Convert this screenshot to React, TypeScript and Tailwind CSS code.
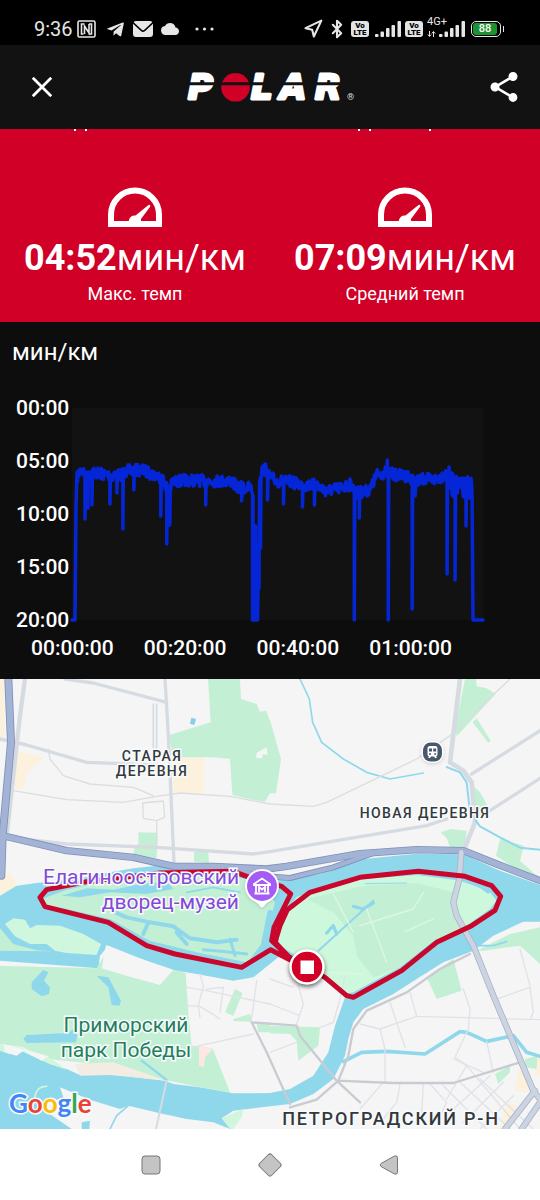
import React from 'react';
import { Bluetooth, Navigation } from 'lucide-react';
import { FaTelegramPlane } from 'react-icons/fa';
import { MdCloud, MdShare } from 'react-icons/md';

type Point = [number, number];

/* ---------- Pace data ---------- */

const TREND: Point[] = [
  [5, 70], [8, 63], [11, 62], [14, 71], [20, 64], [35, 67], [48, 67], [55, 63], [70, 62], [80, 66], [90, 70],
  [94, 77], [97, 84], [101, 74], [115, 72], [135, 73], [160, 73], [165, 79], [179, 80], [181, 84],
  [188, 70], [190, 63], [194, 61], [197, 68], [205, 73], [220, 74], [230, 77], [245, 77], [255, 83],
  [270, 80], [280, 76], [284, 85], [295, 83], [300, 80], [305, 67], [315, 64], [325, 67], [338, 68],
  [344, 75], [352, 71], [362, 72], [376, 66], [380, 76], [390, 82], [401, 78],
];

const DIPS: Point[] = [
  [13, 111], [16, 100], [20, 97], [38, 96], [45, 85], [51, 121], [62, 82], [89, 108], [95, 136],
  [98, 117], [134, 97], [170, 93], [181, 212], [184, 118], [186, 212], [189, 140], [196, 92],
  [212, 96], [231, 99], [243, 97], [283, 212], [288, 110], [317, 212], [341, 201], [344, 88], [376, 166],
  [384, 172], [395, 118],
];

const trendAt = (x: number) => {
  const i = Math.max(1, TREND.findIndex(([px]) => px >= x));
  const [x0, y0] = TREND[i - 1];
  const [x1, y1] = TREND[i];
  return y0 + ((y1 - y0) * (x - x0)) / (x1 - x0);
};

const buildPace = () => {
  const out: string[] = ['0,212', '3,212', '4,100'];
  let seed = 7;
  for (let x = 5; x <= 401; x += 0.5) {
    seed = (seed * 16807) % 2147483647;
    const noise = (seed / 2147483647 - 0.5) * (x > 376 ? 24 : 12);
    const dip = DIPS.find(([px]) => px === x);
    const y = trendAt(x) + noise;
    if (x > 181 && x < 188) {
      out.push(`${x},${dip ? dip[1] : x < 184 ? 212 : 180}`);
      continue;
    }
    out.push(`${x},${y.toFixed(1)}`);
    if (dip) out.push(`${x},${dip[1]}`, `${x + 0.5},${y.toFixed(1)}`);
    if (x === 316) out.push('316,52', '316.5,64');
  }
  out.push('402,212', '412,212');
  return out.join(' ');
};

const PACE_POINTS = buildPace();
const Y_TICKS = ['00:00', '05:00', '10:00', '15:00', '20:00'];
const X_TICKS = ['00:00:00', '00:20:00', '00:40:00', '01:00:00'];

/* ---------- Status bar ---------- */

const VoLte = () => (
  <span className="flex h-4 w-[18px] flex-col items-center justify-center rounded-[3px] bg-[#e4e4e4] text-[8px] leading-[7px] font-black text-black">
    <span>Vo</span>
    <span>LTE</span>
  </span>
);

const Signal = () => (
  <svg className="h-4 w-[26px]" viewBox="0 0 26 16" fill="#e6e6e6" aria-hidden="true">
    <rect x="0" y="13" width="3.500" height="3" rx="1" />
    <rect x="5.500" y="10.500" width="3.500" height="5.500" rx="1" />
    <rect x="11" y="7" width="3.500" height="9" rx="1" />
    <rect x="16.500" y="4" width="3.500" height="12" rx="1" />
    <rect x="22.500" y="0" width="3.500" height="16" rx="1" />
  </svg>
);

const StatusBar = () => (
  <div className="flex h-[45px] items-end justify-between bg-black pr-9 pb-1 pl-[34px] text-[#e6e6e6]">
    <div className="flex h-6 items-center">
      <span className="w-[43px] text-[20px] leading-6">9:36</span>
      <svg className="h-[18px] w-[19px]" viewBox="0 0 19 18" fill="none" stroke="currentColor" aria-hidden="true">
        <rect x="1" y="1" width="17" height="16" rx="1.500" strokeWidth="1.600" />
        <path d="M7.500 4H4.500v10h2M7.500 14V6l4.500 7V4M11.500 14h3V4H12" strokeWidth="1.600" />
      </svg>
      <FaTelegramPlane className="ml-2.5 size-[19px]" aria-hidden="true" />
      <svg className="ml-2 h-4 w-5" viewBox="0 0 20 16" fill="currentColor" aria-hidden="true">
        <path d="M3 0h14a3 3 0 0 1 2.300 1.300L11.200 8.800a1.800 1.800 0 0 1-2.400 0L.7 1.300A3 3 0 0 1 3 0Z" />
        <path d="M0 2.800 7.800 10a3.200 3.200 0 0 0 4.400 0L20 2.800V13a3 3 0 0 1-3 3H3a3 3 0 0 1-3-3Z" />
      </svg>
      <MdCloud className="ml-2 size-[18px]" aria-hidden="true" />
      <svg className="ml-4 h-1 w-5" viewBox="0 0 20 4" fill="currentColor" aria-hidden="true">
        <circle cx="2" cy="2" r="1.600" />
        <circle cx="9.500" cy="2" r="1.600" />
        <circle cx="17" cy="2" r="1.600" />
      </svg>
    </div>
    <div className="flex h-6 items-center">
      <Navigation className="size-5" strokeWidth={2.5} aria-hidden="true" />
      <Bluetooth className="mx-1 size-5" strokeWidth={2.5} aria-hidden="true" />
      <VoLte />
      <span className="ml-1.5"><Signal /></span>
      <span className="ml-1"><VoLte /></span>
      <span className="relative ml-1 flex w-[38px] justify-end">
        <Signal />
        <span className="absolute -top-1.5 left-0 text-[11px] leading-[14px]">4G+</span>
        <svg className="absolute bottom-0 left-0 h-[6px] w-[9px]" viewBox="0 0 9 6" stroke="currentColor" fill="none" aria-hidden="true">
          <path d="M2.500 0v5M.8 3.500l1.700 2 1.700-2M6.500 6V1M4.800 2.500l1.700-2 1.700 2" />
        </svg>
      </span>
      <span className="ml-1.5 flex h-4 w-[30px] rounded-[5px] border border-[#e6e6e6] p-px">
        <span className="flex h-full w-6 items-center justify-center rounded-[3px] bg-[#1e9231] text-[11px] leading-3 font-medium text-white">
          88
        </span>
      </span>
      <span className="ml-0.5 h-1.5 w-px bg-[#e6e6e6]" />
    </div>
  </div>
);

/* ---------- Header ---------- */

const PolarLogo = () => (
  <svg className="h-12 w-44 overflow-visible" viewBox="0 0 176 48" role="img" aria-label="Polar">
    <g fill="#fff" stroke="#fff" strokeWidth="3" strokeLinejoin="round" fontFamily="DejaVu Sans" fontSize="34" fontWeight="700" fontStyle="italic">
      <text x="3" y="36">P</text>
      <text x="66" y="36">L</text>
      <text x="95" y="36">A</text>
      <text x="130" y="36">R</text>
    </g>
    <circle cx="50.500" cy="24.300" r="14.300" fill="#d00027" />
    <path d="M0 19.300h164v3H0z" fill="#121212" />
    <text x="162" y="37" fill="#ddd" fontFamily="Roboto" fontSize="9">®</text>
  </svg>
);

const Header = () => (
  <header className="flex h-[84px] items-center justify-between bg-[#121212] pr-3.5 pl-5 text-white">
    <button type="button" aria-label="Закрыть" className="flex size-11 items-center justify-center">
      <svg className="size-5" viewBox="0 0 20 20" stroke="currentColor" strokeWidth="2.800">
        <path d="M.8.800l18.400 18.400M19.200.800.800 19.200" />
      </svg>
    </button>
    <PolarLogo />
    <button type="button" aria-label="Поделиться" className="flex size-11 items-center justify-center">
      <MdShare className="size-9 shrink-0" />
    </button>
  </header>
);

/* ---------- Summary ---------- */

const Gauge = () => (
  <svg className="h-10 w-[54px]" viewBox="0 0 54 40" aria-hidden="true">
    <path d="M3 37V27.500a24 24 0 0 1 48 0V37Z" fill="none" stroke="#fff" strokeWidth="6" />
    <path d="M21 36a6 6 0 0 1 6.500-7.500L40.500 18q2-.8 1.800 1.500L33 32v4Z" fill="#fff" />
  </svg>
);

interface StatProps {
  value: string;
  unit: string;
  label: string;
}

const Stat: React.FC<StatProps> = ({ value, unit, label }) => (
  <div className="flex flex-col items-center pt-[58px] pb-4">
    <Gauge />
    <p className="mt-[11px] text-[36px] leading-10 whitespace-nowrap">
      <span className="font-bold">{value}</span>{unit}
    </p>
    <p className="mt-1 text-[18px] leading-6">{label}</p>
  </div>
);

const Summary = () => (
  <section className="relative grid grid-cols-2 bg-[#d00027] text-white">
    {/* tails of the row scrolled under the header */}
    <svg className="absolute inset-x-0 top-0 w-full" viewBox="0 0 540 3" fill="#fff" aria-hidden="true">
      <path d="M74 0h2v2h-2zM85 0h2v2h-2zM358 0h2v2h-2zM369 0h2v2h-2zM429 0h2v2h-2z" />
    </svg>
    <Stat value="04:52" unit="мин/км" label="Макс. темп" />
    <Stat value="07:09" unit="мин/км" label="Средний темп" />
  </section>
);

/* ---------- Pace chart ---------- */

const PaceChart = () => (
  <section className="bg-[#0d0d0d] pb-[19px] text-white">
    <h2 className="px-3 pt-4 text-[24px] leading-7">мин/км</h2>
    <div className="mt-[30px] flex pr-[57px] pl-4 text-[21px] leading-6 font-medium">
      <div className="flex h-[236px] w-14 shrink-0 flex-col justify-between">
        {Y_TICKS.map((tick) => (
          <span key={tick}>{tick}</span>
        ))}
      </div>
      <svg className="my-3 h-[212px] min-w-0 flex-1 overflow-visible" viewBox="0 0 412 212" preserveAspectRatio="none" role="img" aria-label="График темпа">
        <rect width="412" height="212" fill="#121212" />
        <polyline points={PACE_POINTS} fill="none" stroke="#0526d6" strokeWidth="3.500" strokeLinejoin="round" strokeLinecap="round" />
      </svg>
    </div>
    <div className="mt-1 mr-[73px] ml-4 grid grid-cols-4 text-center text-[21px] leading-6 font-medium">
      {X_TICKS.map((tick) => (
        <span key={tick}>{tick}</span>
      ))}
    </div>
  </section>
);

/* ---------- Map ---------- */

const MapDrawing = () => (
  <svg className="block h-auto w-full" viewBox="0 0 1620 1350" aria-hidden="true" strokeLinejoin="round" strokeLinecap="round">
    <rect width="1620" height="1350" fill="#f5f5f5" />

    {/* built-up patches */}
    <g fill="#fbf1dd">
      <path d="M0 0H14V180L0 190ZM50 215 130 235 80 285 72 330H45ZM518 236H612V344L520 338Z" />
      <path d="M0 600 30 580 50 622 0 648ZM1555 1170 1590 1180 1600 1240 1545 1235ZM1600 1140 1620 1130V1190H1608Z" />
      <path d="M1520 1270 1570 1290 1520 1350H1500Z" />
    </g>

    {/* parks */}
    <g fill="#c3f0d4">
      <path d="M624 0H720L723 60 770 75 780 98 798 95 812 130 843 240 828 343H810L795 368 755 362 697 348 690 240 640 235H518L508 168 632 130Z" />
      <path d="M415 460 473 461 470 538 400 530 405 500 415 495ZM582 518H625L627 552 582 548Z" />
      <path d="M1395 0H1428L1430 22 1460 28 1487 45 1370 172 1365 150ZM1418 130 1430 118 1472 185 1465 192Z" />
      <path d="M1420 322 1440 340 1462 378V395L1440 410 1415 400ZM1322 460 1352 450 1400 455 1395 510 1350 505 1340 478Z" />
      <path d="M1500 480 1572 500 1560 545 1608 588 1550 572 1488 530Z" />
      <path d="M1280 895 1360 840 1385 935 1310 960ZM810 1040 960 1045 955 1100 895 1145 890 1085 870 1065 810 1063Z" />
      <path d="M1485 1185 1530 1160V1180L1495 1215ZM1430 815 1530 765 1620 745V855L1560 800 1450 815ZM1575 1140 1612 1130 1610 1170 1575 1165Z" />
      <path d="M675 1000 705 930 728 942 700 1010ZM700 1020 750 1005 757 1028 700 1026ZM770 1035H810V1060H775Z" />
    </g>
    <path d="M770 222 800 205 803 228 790 225 785 238 768 236Z" fill="#f5f5f5" />
    <path d="M574 116 588 120 583 138 570 134Z" fill="#7fd0ea" />

    {/* Neva arms */}
    <path
      d="M0 650 50 620 110 612 230 600 300 585 400 568 490 558 600 570 760 585 830 605 960 585 1090 540 1250 524 1390 526 1500 575 1620 618V728L1570 728 1480 770 1420 815 1330 850 1250 900 1180 945 1090 990 1060 1030 1045 1080 1035 1130 1000 1200 940 1245 870 1275 810 1282 700 1295 665 1318 700 1350H690L640 1330 560 1320 480 1303 385 1280 360 1290 270 1262 180 1225 190 1255 120 1285 215 1350H0V1115L30 1125 70 1118 150 1155 200 1170 240 1188 330 1187 400 1195 495 1205 520 1215 600 1225 700 1243 810 1242 870 1230 940 1190 985 1120 1005 1040 1035 955 970 900 865 840 835 835 760 895 700 905 590 885 500 870 325 800 300 830 295 868 0 845Z"
      fill="#8fd8ec"
    />
    <path d="M104 1255Q110 1220 140 1222" fill="none" stroke="#cdf6dc" strokeWidth="5" />
    <path d="M245 1330 270 1325 268 1350H245Z" fill="#8fd8ec" />
    <path d="M385 1280 350 1310 330 1350" fill="none" stroke="#8fd8ec" strokeWidth="5" />
    <path d="M665 1318 730 1290 725 1315 700 1350H690Z" fill="#d0f6dd" />

    {/* Primorsky park */}
    <path d="M0 860 290 868 310 835 390 880 480 915 520 872 557 882 565 1000 575 1100 638 1108 690 1240 600 1225 495 1203 400 1195 330 1170 240 1150 140 1140 70 1105 0 1095Z" fill="#c3f0d4" />
    <path d="M0 1095 60 1105 140 1130 200 1172 150 1155 70 1118 30 1125 0 1115Z" fill="#d0f6dd" />
    <path d="M10 1095 60 1108 145 1132 125 1145 70 1115 50 1130 15 1120Z" fill="#f5f5f5" />
    <path d="M225 1155 340 1150 500 1205 390 1192 330 1188 240 1190Z" fill="#f3ece2" />
    <path d="M318 798 400 832 520 872 480 918 395 895 305 868Z" fill="#f5f5f5" />
    <path d="M597 1100 640 1110 615 1135 612 1165 597 1160Z" fill="#fde6e3" />
    <path d="M130 872 145 880 132 905 150 925 147 945 125 952 95 930 95 910ZM290 890 325 895 363 965 358 980 335 978 325 925ZM70 1080 80 1068 205 1062 220 1050 232 1068 228 1090 80 1092Z" fill="#8fd8ec" />
    <path d="M425 1145 500 1203" stroke="#8fd8ec" strokeWidth="7" />

    {/* small western island */}
    <path d="M15 735 40 718 75 722 90 748 110 738 180 740 250 765 303 795 290 828 200 822 165 815 140 795 90 795 45 772Z" fill="#cff7dd" />
    <path d="M0 748 40 795 110 814 160 817 0 815Z" fill="#c3f0d4" />

    {/* Elagin island */}
    <path d="M132 658 200 632 320 605 480 580 600 582 740 600 800 635 825 670 805 740 790 805 740 850 600 822 450 785 330 720 200 690 135 678Z" fill="#c3f0d4" />
    <path d="M185 650 260 628 340 632 420 615 500 608 520 630 440 645 330 640 240 655Z" fill="#8fd8ec" />
    <g fill="none" stroke="#8fd8ec">
      <path d="M345 700 380 715 440 728 520 742 570 778 650 790 710 782M530 760 560 795M445 730 430 765" strokeWidth="12" />
      <path d="M610 812 680 818 740 825M690 780 705 830" strokeWidth="9" />
      <path d="M810 700 790 800 760 840" strokeWidth="16" />
      <path d="M560 640 640 625 720 640" strokeWidth="5" />
    </g>

    {/* Kamenny island */}
    <path d="M848 705 890 655 960 625 1090 600 1250 588 1390 606 1470 640 1490 665 1470 690 1400 740 1300 785 1200 865 1060 940 1030 945 960 885 880 825 838 800 836 760Z" fill="#cdf8dc" />
    <path d="M920 660 1090 620 1250 612 1360 640 1365 700 1395 745 1300 785 1200 865 1120 895 1070 830 1060 770 1000 700Z" fill="#c3f0d4" />
    <g fill="none" stroke="#8fd8ec">
      <path d="M1120 665 955 815" strokeWidth="6" />
      <path d="M1060 682 1090 690 1120 672M980 762 1000 740 1010 765" strokeWidth="10" />
      <path d="M1095 614 1220 612" strokeWidth="3" />
      <path d="M1385 603 1440 622 1465 640" strokeWidth="8" />
    </g>
    <path d="M1000 645 1060 760M1080 740 1240 690 1270 640M1215 758 1300 720M1100 690 1160 850M910 870 990 880 1090 885" fill="none" stroke="#dcf7e5" strokeWidth="4" />

    {/* streams */}
    <g fill="none" stroke="#8fd8ec">
      <path d="M900 0 928 60 938 130 965 190 1030 240 1100 280 1170 300 1270 282" strokeWidth="5" />
      <path d="M1030 1148 1085 1120 1160 1117 1275 1125 1380 1058 1400 1060 1460 1087 1540 1070 1580 1120 1620 1132" strokeWidth="11" />
      <path d="M1430 800 1480 800 1520 788" strokeWidth="5" />
    </g>

    {/* streets */}
    <g fill="none" stroke="#dfe2e8" strokeWidth="4">
      <path d="M560 925 620 935 810 975M600 885 610 920 595 980 600 1015M565 980 600 983 630 1000 660 1020M620 930 670 925 660 1000M810 1120 890 1090M575 1105 760 1065M810 900 880 925M770 905 755 1020" />
      <path d="M810 975 895 1008M895 920 910 975 890 1035M1035 890 1020 960 1000 1030 960 1045M1080 1035 1140 1050 1250 1012 1620 1022M1170 970 1215 1105M1140 1050 1155 1110V1210M1230 940 1250 1012" />
      <path d="M1390 930 1410 990 1405 1050 1365 1135 1400 1160 1560 1350M1490 960 1590 925 1600 1000 1590 1022M1560 810 1590 920M1460 1087 1480 1180M1400 1160 1340 1260M1380 1210 1530 1350M1440 1200 1600 1350M1330 1220 1460 1350" />
      <path d="M1200 1215 1190 1270 1150 1320M1270 1215 1265 1300M1290 1215 1340 1270 1310 1330M1150 1210 1080 1290M1360 1140 1450 1180M1470 1190 1350 1300M1510 1210 1390 1330M1540 1250 1440 1350" />
    </g>
    <g fill="none" stroke="#dcdddf" strokeWidth="4">
      <path d="M145 210 150 240 190 290 270 315 400 325 460 350M40 335 200 362 370 370 470 352 540 342 690 352 810 375 940 382 980 370 1250 240 1350 170 1530 0M428 372 490 366 494 415 470 425 430 418ZM470 425V510" />
    </g>
    <g fill="none" stroke="#d6dbe2">
      <path d="M75 0 60 110 20 470" strokeWidth="13" />
      <path d="M0 180 80 198 260 250 470 258M195 0 280 12 500 70" strokeWidth="10" />
      <path d="M495 0 505 170 522 550" strokeWidth="10" />
      <path d="M460 75V215M470 75V215" strokeWidth="5" />
      <path d="M30 475 200 495 470 505 760 525 810 518 1280 440 1340 420" strokeWidth="10" />
      <path d="M1380 0 1350 250 1390 275 1415 310 1425 430 1395 505" strokeWidth="14" />
      <path d="M1415 285 1620 155M1465 398 1620 298" strokeWidth="10" />
      <path d="M500 1205 468 1350" strokeWidth="6" />
    </g>
    <path d="M1340 264 1380 280 1400 310 1410 400 1440 442 1500 475 1560 506 1620 512" fill="none" stroke="#8fd8ec" strokeWidth="6" />
    <g fill="none" stroke="#c9cbd2" strokeWidth="7">
      <path d="M755 1030 890 1040 900 1070 1010 1205 1080 1270M755 1030 800 1120 870 1275M1010 1205 1180 1212 1360 1212 1560 1150" />
      <path d="M870 1285 950 1262 1015 1205 1045 1130 1060 1050 1100 995 1220 940 1320 870 1410 825" />
    </g>

    {/* highways */}
    <g fill="none" stroke="#7f90b8">
      <path d="M25 0 33 190 8 470 4 590" strokeWidth="24" />
      <path d="M0 468 200 515 400 535 520 562 640 562 800 570 860 562 1080 524 1250 512 1390 515 1490 555 1620 605" strokeWidth="22" />
      <path d="M690 572 800 592 870 597 1000 565 1120 522" strokeWidth="18" />
    </g>
    <g fill="none" stroke="#a2b3d5">
      <path d="M25 0 33 190 8 470 4 590" strokeWidth="19" />
      <path d="M0 468 200 515 400 535 520 562 640 562 800 570 860 562 1080 524 1250 512 1390 515 1490 555 1620 605" strokeWidth="17" />
      <path d="M690 572 800 592 870 597 1000 565 1120 522" strokeWidth="13" />
    </g>
    <g fill="none">
      <path d="M1384 520 1378 600 1360 670 1370 710 1420 800 1480 950 1600 1235 1620 1260M1605 1235 1515 1350M1620 1270 1565 1350" stroke="#a9b4c8" strokeWidth="19" />
      <path d="M1384 520 1378 600 1360 670 1370 710 1420 800 1480 950 1600 1235 1620 1260M1605 1235 1515 1350M1620 1270 1565 1350" stroke="#ccd4e2" strokeWidth="14" />
    </g>

    {/* recorded track */}
    <path
      d="M920 865 865 832 825 790 840 740 862 692 930 640 1080 595 1255 577 1395 592 1475 620 1502 652 1485 694 1415 740 1310 790 1205 875 1105 930 1060 955 1040 950 975 895 920 865 865 840 812 812 725 865 525 825 440 800 325 730 135 683 120 655 140 632 260 608 480 582 700 577 740 592 845 622 872 645 822 745 815 785 865 832"
      fill="none"
      stroke="#c9062c"
      strokeWidth="15"
    />
  </svg>
);

const MuseumPin = () => (
  <svg className="absolute top-[188px] left-[242px] h-[46px] w-10 drop-shadow" viewBox="0 0 40 46" role="img" aria-label="Музей">
    <path d="M20 2a17 17 0 0 1 10 30.700c-4 2.500-7 4-8 6.500q-2 2.500-4 0c-1-2.500-4-4-8-6.500A17 17 0 0 1 20 2Z" fill="#fff" />
    <circle cx="20" cy="19" r="15" fill="#a45cf5" />
    <path d="M12 17 20 11.500 28 17v1H12ZM12.500 26.500h15M14 18v8M26 18v8" fill="none" stroke="#fff" strokeWidth="1.800" />
    <path d="M17 25v-5l3 2.500 3-2.500v5" fill="none" stroke="#fff" strokeWidth="1.800" />
  </svg>
);

const StationPin = () => (
  <svg className="absolute top-[60px] left-[420px] size-[26px] drop-shadow" viewBox="0 0 26 26" role="img" aria-label="Станция">
    <rect x="1.500" y="2" width="22" height="22" rx="9" fill="#fff" />
    <rect x="3" y="3.500" width="19" height="19" rx="7.500" fill="#47586a" />
    <path d="M10 7h5a2.500 2.500 0 0 1 2.500 2.500v6a2 2 0 0 1-1.500 2l1 1.500h-2l-1-1.500h-3L10 19H8l1-1.500a2 2 0 0 1-1.500-2v-6A2.500 2.500 0 0 1 10 7Z" fill="#fff" />
    <path d="M9 9.500h3v3H9zM13.200 9.500h3v3h-3zM9 14.200h2v1.600H9zM14.200 14.200h2v1.600h-2z" fill="#47586a" />
  </svg>
);

const StopPin = () => (
  <svg className="absolute top-[268px] left-[287px] size-10 drop-shadow-[0_2px_2px_#0009]" viewBox="0 0 40 40" role="img" aria-label="Финиш">
    <circle cx="20" cy="20" r="16.500" fill="#d00027" stroke="#fff" strokeWidth="2.500" />
    <rect x="13.500" y="13.500" width="13.500" height="13.500" fill="#fff" />
  </svg>
);

const RouteMap = () => (
  <section className="relative overflow-hidden" aria-label="Карта маршрута">
    <MapDrawing />
    <MuseumPin />
    <StationPin />
    <StopPin />
    <div className="[paint-order:stroke] [-webkit-text-stroke:3px_#f8fbfb]">
      <p className="absolute top-[70px] left-[102px] w-[100px] text-center text-[14px] leading-[15px] font-medium tracking-widest text-[#34383c]">
        СТАРАЯ ДЕРЕВНЯ
      </p>
      <p className="absolute top-[126px] left-[354px] w-[142px] text-center text-[14px] leading-4 font-medium tracking-widest whitespace-nowrap text-[#34383c]">
        НОВАЯ ДЕРЕВНЯ
      </p>
      <p className="absolute top-[186px] left-[28px] w-[211px] text-right text-[21px] leading-[25px] text-[#8448d8]">
        Елагиноостровский дворец-музей
      </p>
      <p className="absolute top-[334px] left-[46px] w-[160px] text-center text-[21px] leading-[25px] text-[#1f7f5e]">
        Приморский парк Победы
      </p>
      <p className="absolute top-[429px] left-[270px] w-[242px] text-center text-[18px] leading-[22px] font-medium tracking-widest whitespace-nowrap text-[#34383c]">
        ПЕТРОГРАДСКИЙ Р-Н
      </p>
      <p className="absolute top-[408px] left-[9px] font-[Lato] text-[26px] leading-8 font-bold">
        <span className="text-[#4285f4]">G</span>
        <span className="text-[#ea4335]">o</span>
        <span className="text-[#fbbc05]">o</span>
        <span className="text-[#4285f4]">g</span>
        <span className="text-[#34a853]">l</span>
        <span className="text-[#ea4335]">e</span>
      </p>
    </div>
  </section>
);

/* ---------- System navigation ---------- */

const NavBar = () => (
  <nav className="flex min-h-[71px] flex-1 items-center justify-center bg-white">
    <button type="button" aria-label="Недавние" className="flex h-12 w-[119px] items-center justify-center">
      <svg className="size-5" viewBox="0 0 20 20" fill="#c4c4c4" stroke="#777">
        <rect x="1" y="1" width="18" height="18" rx="3" />
      </svg>
    </button>
    <button type="button" aria-label="Домой" className="flex h-12 w-[119px] items-center justify-center">
      <svg className="size-[26px]" viewBox="0 0 26 26" fill="#c4c4c4" stroke="#777">
        <rect x="4.500" y="4.500" width="17" height="17" rx="2.500" transform="rotate(45 13 13)" />
      </svg>
    </button>
    <button type="button" aria-label="Назад" className="flex h-12 w-[119px] items-center justify-center">
      <svg className="size-5" viewBox="0 0 20 20" fill="#c4c4c4" stroke="#777">
        <path d="M2 8.500 15.500 1q3-1 3 2v14q0 3-3 2L2 11.500q-1.800-1.500 0-3Z" />
      </svg>
    </button>
  </nav>
);

const App: React.FC = () => (
  <main className="flex min-h-screen flex-col overflow-x-hidden bg-[#0d0d0d] font-[Roboto,sans-serif]">
    <StatusBar />
    <Header />
    <Summary />
    <PaceChart />
    <RouteMap />
    <NavBar />
  </main>
);

export default App;
